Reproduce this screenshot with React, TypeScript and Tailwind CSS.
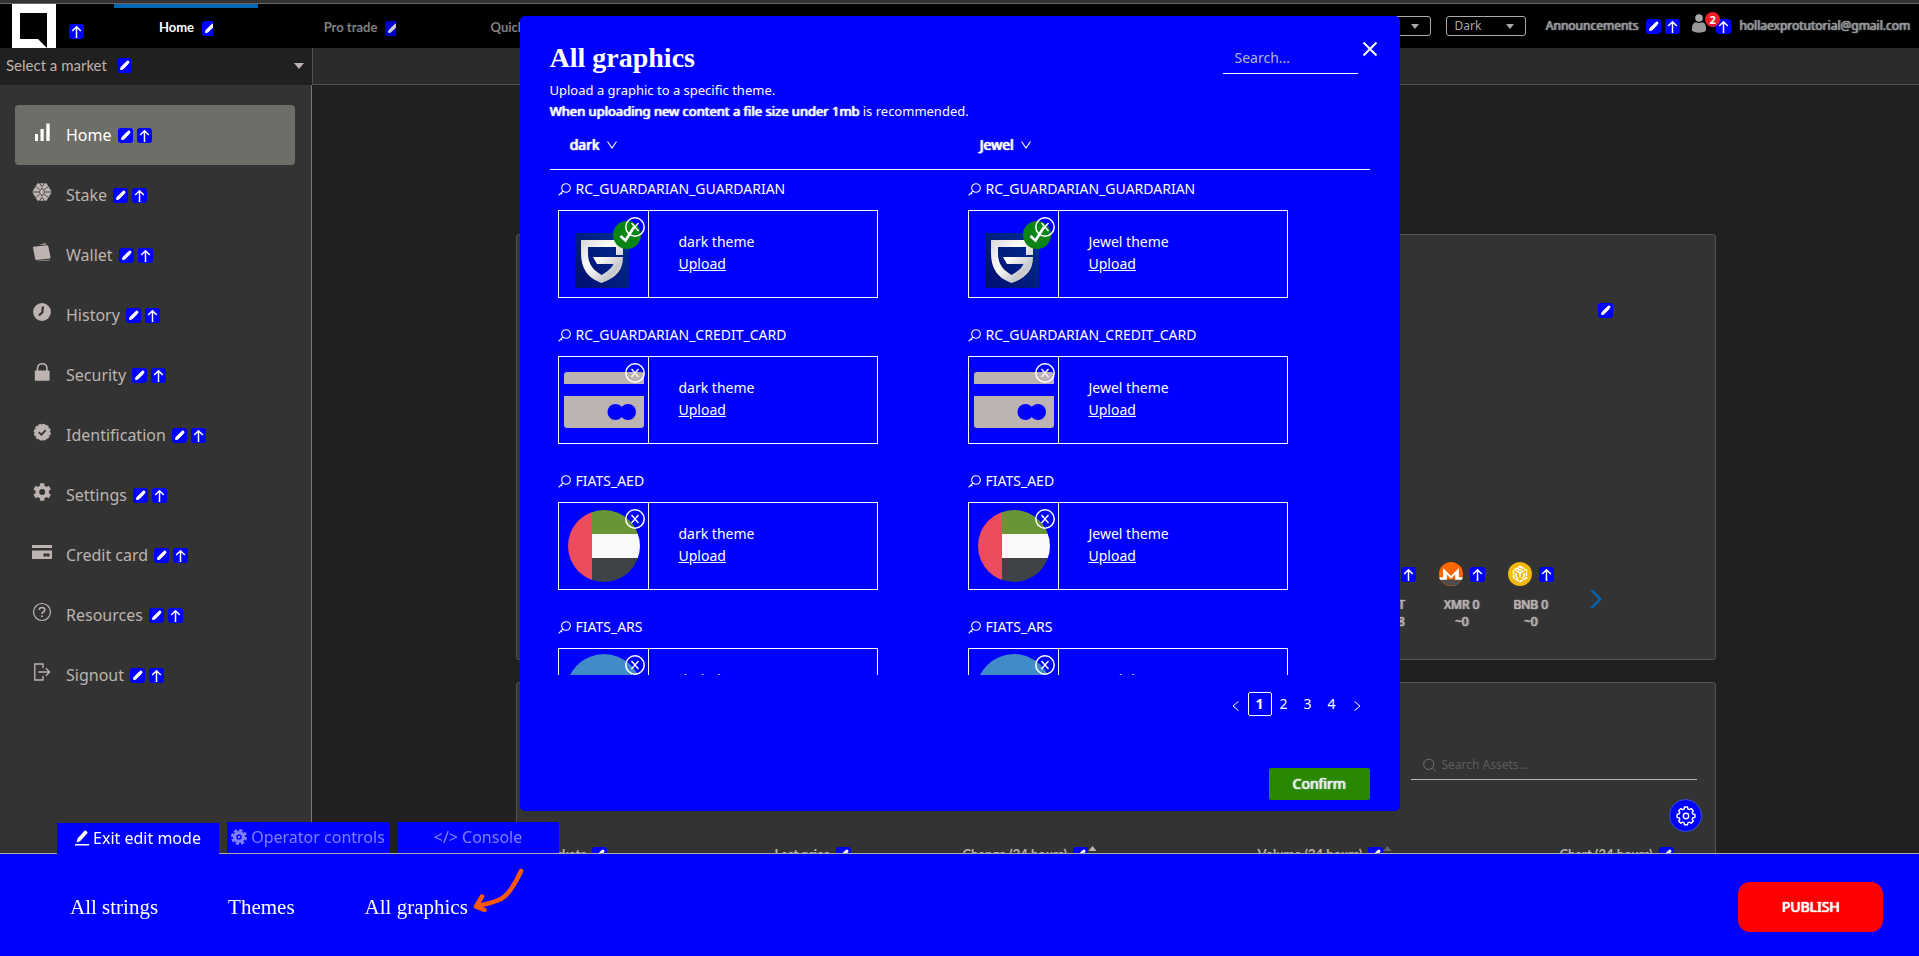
import type { ReactNode } from "react";

const softBold = "[text-shadow:0_0_1px_currentColor,1px_0_1px_currentColor]";

function PencilShape() {
  return (
    <>
      <path d="M3.2 12l.7-3L8.900 3.900l2.400 2.300L6.200 11.300z" fill="#fff" />
      <path d="M9.300 3.500l.7-.6c.3-.3.7-.3 1 0l1.200 1.200c.3.3.3.7 0 1l-.6.7z" fill="#fff" />
      <path d="M4.500 10.500L11 4" stroke="#fff" strokeWidth="2.600" strokeLinecap="round" />
    </>
  );
}

function EditBadge({ narrow = false, dim = false }: { narrow?: boolean; dim?: boolean }) {
  return (
    <button
      type="button"
      aria-label="Edit text"
      className={`flex h-[15px] shrink-0 items-center overflow-hidden rounded-[3px] bg-[#0000ff] ${narrow ? "w-[11px] rounded-r-none" : "w-[15px]"} ${dim ? "opacity-80" : ""}`}
    >
      <svg width="15" height="15" viewBox="0 0 15 15" className="shrink-0" aria-hidden="true">
        <PencilShape />
      </svg>
    </button>
  );
}

function UploadBadge({ className = "" }: { className?: string }) {
  return (
    <button
      type="button"
      aria-label="Upload graphic"
      className={`h-[15px] w-[15px] shrink-0 rounded-[3px] bg-[#0000ff] ${className}`}
    >
      <svg width="15" height="15" viewBox="0 0 15 15" aria-hidden="true">
        <path d="M7.500 14V3.200M3.200 7l4.300-4.300L11.800 7" fill="none" stroke="#fff" strokeWidth="1.500" />
      </svg>
    </button>
  );
}

const icons: Record<string, ReactNode> = {
  home: <path d="M3 12h3v7H3zM8.500 7h3.200v12H8.500zM14.300 1.500h3.400V19h-3.400z" fill="currentColor" />,
  stake: (
    <>
      <path d="M5.500 1.300h9L19.800 10l-5.300 8.700h-9L.2 10z" fill="currentColor" />
      <path
        d="M0 10h7M13 10h7M7.500 1L10 4.800 12.500 1M7.500 19l2.500-3.800 2.500 3.800M10 6L7.200 10l2.800 4 2.800-4zM3.800 4.500l4 3.200M16.200 4.500l-4 3.200M3.800 15.500l4-3.200M16.200 15.500l-4-3.200"
        fill="none"
        stroke="#333"
        strokeWidth=".8"
      />
    </>
  ),
  wallet: (
    <path
      d="M1.300 4.700L14.800 3.200q1.200 0 1.500 1.200l2.200 10.500q.2 1.200-1 1.500l-13 1.600q-1.300 0-1.400-1.200L1 5.500zM6.500 3l7-2 .8 1.400zM5 19l13-1.500v.8L6 19.300z"
      fill="currentColor"
    />
  ),
  history: (
    <>
      <circle cx="10" cy="10" r="8.900" fill="currentColor" />
      <path d="M10.900 4.500L10.300 10.300 7 13.500" fill="none" stroke="#333" strokeWidth="2.200" />
    </>
  ),
  security: (
    <>
      <rect x="2.800" y="8.500" width="14.800" height="10.200" rx=".8" fill="currentColor" />
      <path d="M5.500 9V6.500C5.500 3.500 7.300 1.800 10.200 1.800s4.700 1.700 4.700 4.700V9" fill="none" stroke="currentColor" strokeWidth="1.600" />
    </>
  ),
  identification: (
    <>
      <circle cx="10.300" cy="10.200" r="7.700" fill="currentColor" />
      <circle cx="10.300" cy="10.200" r="7.700" fill="none" stroke="currentColor" strokeWidth="1.600" strokeDasharray="3 1" />
      <path d="M6.800 10.200l2.700 2.500 4.200-4.500" fill="none" stroke="#333" strokeWidth="1.700" />
    </>
  ),
  settings: (
    <>
      <circle cx="10.200" cy="10" r="4.900" fill="none" stroke="currentColor" strokeWidth="3.800" />
      <path
        d="M10.200 1.200v3M10.200 15.800v3M2.500 5.600l2.600 1.500M15.300 12.900l2.600 1.500M2.500 14.400l2.600-1.500M15.300 7.100l2.600-1.500"
        stroke="currentColor"
        strokeWidth="4.200"
      />
    </>
  ),
  card: (
    <>
      <path d="M.8 3h18.400q.8 0 .8.800V6H0V3.800Q0 3 .8 3zM0 8.500h20V16.200q0 .8-.8.800H.8q-.8 0-.8-.8z" fill="currentColor" />
      <circle cx="13" cy="13" r="1.800" fill="#333" />
      <circle cx="16" cy="13" r="1.800" fill="#333" />
    </>
  ),
  resources: (
    <>
      <circle cx="10" cy="10" r="8.500" fill="none" stroke="currentColor" strokeWidth="1.200" />
      <path d="M7.200 8q0-2.600 2.800-2.600T12.800 8q0 1.300-1.400 2T10 12" fill="none" stroke="currentColor" strokeWidth="1.500" />
      <circle cx="10" cy="14.300" r="1" fill="currentColor" />
    </>
  ),
  signout: (
    <path
      d="M11 6V2H2.800v16H11v-4M6.500 10h11M13.800 6.200L17.600 10l-3.800 3.800"
      fill="none"
      stroke="currentColor"
      strokeWidth="1.300"
    />
  ),
};

const menu = [
  ["home", "Home"],
  ["stake", "Stake"],
  ["wallet", "Wallet"],
  ["history", "History"],
  ["security", "Security"],
  ["identification", "Identification"],
  ["settings", "Settings"],
  ["card", "Credit card"],
  ["resources", "Resources"],
  ["signout", "Signout"],
];

function Caret({ className = "" }: { className?: string }) {
  return (
    <svg width="10" height="6" viewBox="0 0 10 6" className={className} aria-hidden="true">
      <path d="M0 0h10L5 6z" fill="currentColor" />
    </svg>
  );
}

function HeaderSelect({ label, value }: { label: string; value: string }) {
  return (
    <div className="relative h-5 w-20 text-[#aaa]">
      <select
        aria-label={label}
        className="h-5 w-full appearance-none rounded-[3px] border border-[#aaa] bg-black pl-2 text-xs leading-4 text-[#aaa]"
      >
        <option>{value}</option>
      </select>
      <Caret className="pointer-events-none absolute top-2 right-3 h-[5px] w-2" />
    </div>
  );
}

function Header() {
  return (
    <header className="flex h-11 shrink-0 items-stretch bg-black text-[13px]">
      <div className="flex w-[114px] shrink-0 items-center pl-3">
        <svg width="44" height="44" viewBox="0 0 44 44" role="img" aria-label="Exchange logo">
          <path d="M0 0h44v44H0z" fill="#fff" />
          <path d="M8 9h27v35l-9-9H8z" fill="#000" />
        </svg>
        <UploadBadge className="mt-2.5 ml-[13px]" />
      </div>
      <nav className="flex gap-[30px] font-['Lato',sans-serif] font-bold">
        <a href="#home" className="flex w-36 items-center justify-center gap-2 border-t-4 border-[#0066b4] text-white">
          Home <EditBadge narrow />
        </a>
        <a href="#trade" className="flex w-36 items-center justify-center gap-2 border-t-4 border-transparent text-[#808080]">
          Pro trade <EditBadge narrow dim />
        </a>
        <a href="#quick" className="flex w-36 items-center justify-center gap-2 border-t-4 border-transparent text-[#808080]">
          Quick trade <EditBadge narrow dim />
        </a>
      </nav>
      <div className="mr-[9px] ml-auto flex items-center text-xs text-[#999]">
        <div className="mr-5 flex gap-[15px]">
          <HeaderSelect label="Language" value="EN" />
          <HeaderSelect label="Theme" value="Dark" />
        </div>
        <a href="#announcements" className={softBold}>Announcements</a>
        <span className="ml-2 flex gap-1">
          <EditBadge />
          <UploadBadge />
        </span>
        <span className="relative ml-3 flex items-center">
          <svg width="14" height="19" viewBox="0 0 14 19" className="mr-2.5 mb-1.5" aria-hidden="true">
            <circle cx="7" cy="4" r="3.800" fill="#aaa" />
            <path d="M0 14Q0 9 4 8.300q3 1.400 6 0 4 .7 4 5.700v3q-7 3.400-14 0z" fill="#999" />
          </svg>
          <UploadBadge />
          <span className="absolute -top-0.5 left-[13px] flex h-[15px] w-[15px] items-center justify-center rounded-full bg-[#ee1c25] text-[11px] leading-none font-bold text-white">
            2
          </span>
        </span>
        <a href="#account" className={`ml-2 ${softBold}`}>hollaexprotutorial@gmail.com</a>
      </div>
    </header>
  );
}

function Sidebar() {
  return (
    <aside className="w-[312px] shrink-0 border-r border-[#777] bg-[#333] pt-5 pl-[15px]">
      {menu.map(([icon, label], i) => (
        <div
          key={icon}
          className={`flex h-[60px] w-[280px] items-center rounded pl-[17px] text-base ${i === 0 ? "bg-[#6d6e68] text-white" : "text-[#bdb3b0]"}`}
        >
          <svg width="20" height="20" viewBox="0 0 20 20" className="mr-3.5 mb-1.5 shrink-0" aria-hidden="true">
            {icons[icon]}
          </svg>
          <a href={`#${icon}`}>{label}</a>
          <span className="ml-1.5 flex gap-1 pt-px">
            <EditBadge />
            <UploadBadge />
          </span>
        </div>
      ))}
    </aside>
  );
}

function Coin({ symbol, value, children }: { symbol: string; value: string; children: ReactNode }) {
  return (
    <div className="flex w-[46px] flex-col items-center">
      <div className="mb-2.5 flex items-center gap-[7px]">
        {children}
        <UploadBadge />
      </div>
      <div className={`text-xs leading-[17px] whitespace-nowrap ${softBold}`}>{symbol}</div>
      <div className={`text-xs leading-[17px] ${softBold}`}>{value}</div>
    </div>
  );
}

function SortMark({ dim = false }: { dim?: boolean }) {
  return (
    <svg width="9" height="12" viewBox="0 0 9 12" className="self-start" aria-hidden="true">
      <path d="M.5 5L4.500 0l4 5z" fill={dim ? "#666" : "#bdb3b0"} />
      <path d="M.5 7h8l-4 5z" fill="#666" />
    </svg>
  );
}

function MainArea() {
  const columns = ["Markets", "Last price", "Change (24 hours)", "Volume (24 hours)", "Chart (24 hours)"];
  return (
    <main className="min-w-0 flex-1 overflow-hidden bg-[#202020] pt-[149px] text-[#bdb3b0]">
      <div className="mx-auto max-w-[1200px]">
        <section className="flex h-[426px] flex-col items-end justify-between rounded-[3px] border border-[#555] bg-[#333] pt-[68px] pb-[29px]">
          <div className="mr-[102px]">
            <EditBadge />
          </div>
          <div className="mr-[113px] flex items-center">
            <div className="flex gap-[23px]">
              <Coin symbol="DOT" value="~9.8">
                <svg width="24" height="24" viewBox="0 0 24 24" aria-hidden="true">
                  <circle cx="12" cy="12" r="12" fill="#e6007a" />
                </svg>
              </Coin>
              <Coin symbol="XMR 0" value="~0">
                <svg width="24" height="24" viewBox="0 0 24 24" aria-hidden="true">
                  <circle cx="12" cy="12" r="12" fill="#ff6600" />
                  <path d="M1.500 17.500h21A12 12 0 0 1 1.500 17.500z" fill="#4d4d4d" />
                  <path d="M1 17.800h6.800v-5.300l4.200 4.200 4.200-4.200v5.300H23l.8-2.600h-3.900V6L12 13.900 4.100 6v9.200H.2z" fill="#fff" />
                </svg>
              </Coin>
              <Coin symbol="BNB 0" value="~0">
                <svg width="24" height="24" viewBox="0 0 24 24" aria-hidden="true">
                  <circle cx="12" cy="12" r="12" fill="#f0b90b" />
                  <path
                    d="M12 4.500l6.500 3.700v7.600L12 19.500l-6.500-3.700V8.200zM8 8.500l4 2.300 4-2.300M12 10.800v5.500M8 11v4l2 1.200M16 11v4l-2 1.200M9.500 6.500L12 8l2.500-1.500"
                    fill="none"
                    stroke="#fff"
                    strokeWidth="1.600"
                    strokeDasharray="4 .8"
                  />
                </svg>
              </Coin>
            </div>
            <button type="button" aria-label="Next assets" className="mt-1.5 ml-9">
              <svg width="12" height="18" viewBox="0 0 12 18" aria-hidden="true">
                <path d="M0 0h3l9 9-9 9H0l8.500-9z" fill="#0066b4" />
              </svg>
            </button>
          </div>
        </section>
        <section className="mt-[22px] h-[400px] rounded-[3px] border border-[#555] bg-[#333] pt-[68px] pl-[22px] text-[13px]">
          <label className="mr-[18px] ml-auto flex h-[29px] w-[286px] items-center border-b border-[#bdb3b0] pl-3">
            <svg width="15" height="15" viewBox="0 0 15 15" aria-hidden="true">
              <path d="M10 10l4.500 4.500M6.200.7a5.500 5.500 0 1 0 0 11 5.500 5.500 0 0 0 0-11z" fill="none" stroke="#777" />
            </svg>
            <input
              type="text"
              aria-label="Search assets"
              placeholder="Search Assets..."
              className="ml-[5px] w-full bg-transparent text-xs outline-none placeholder:text-[#5c5c5c]"
            />
          </label>
          <table className="mt-[66px] w-full table-fixed border-collapse">
            <colgroup>
              <col className="w-[236px]" />
              <col className="w-[188px]" />
              <col className="w-[295px]" />
              <col className="w-[302px]" />
              <col />
            </colgroup>
            <thead>
              <tr>
                {columns.map((column, i) => (
                  <th key={column} scope="col" className="p-0 text-left font-['Lato',sans-serif] font-bold">
                    <span className="flex items-center leading-4">
                      <span className="mr-1.5">{column}</span>
                      <EditBadge />
                      {(i === 2 || i === 3) && <SortMark dim={i === 3} />}
                    </span>
                  </th>
                ))}
              </tr>
            </thead>
          </table>
        </section>
      </div>
    </main>
  );
}

function GuardarianArt() {
  return (
    <svg width="88" height="86" viewBox="0 0 88 86" aria-hidden="true">
      <defs>
        <linearGradient id="navy" x1="0" y1="1" x2="1" y2="0">
          <stop offset="0" stopColor="#000d70" />
          <stop offset="1" stopColor="#003090" />
        </linearGradient>
        <linearGradient id="steel" x1="0" y1="0" x2="1" y2="1">
          <stop offset="0" stopColor="#d8d8dc" />
          <stop offset=".4" stopColor="#ffffff" />
          <stop offset=".75" stopColor="#c8c8cc" />
          <stop offset="1" stopColor="#f4f4f4" />
        </linearGradient>
      </defs>
      <path d="M16 22h54v55H16z" fill="url(#navy)" />
      <path
        d="M22 29h42v15h-7v-8H29v6c0 11 5 17 13.500 22C49 60 53 57 54.500 53H38l-4-7h30c0 14-8 21-21.500 26C29 67 22 58 22 42z"
        fill="url(#steel)"
      />
      <circle cx="68" cy="24" r="14" fill="#0a8414" />
      <path d="M61.500 25l5 4.500L75 16" fill="none" stroke="#fff" strokeWidth="2.600" />
    </svg>
  );
}

function CardArt() {
  return (
    <svg width="88" height="86" viewBox="0 0 88 86" aria-hidden="true">
      <path d="M8 15h74q3 0 3 3v9H5v-9q0-3 3-3zM5 39h80v29q0 3-3 3H8q-3 0-3-3z" fill="#bdb3b0" />
      <circle cx="56.500" cy="55" r="8" fill="#0000ff" />
      <circle cx="69" cy="55" r="8" fill="#0000ff" />
    </svg>
  );
}

function AedArt({ id }: { id: string }) {
  return (
    <svg width="88" height="86" viewBox="0 0 88 86" aria-hidden="true">
      <clipPath id={id}>
        <circle cx="45" cy="43" r="36" />
      </clipPath>
      <g clipPath={`url(#${id})`}>
        <path d="M33 7h48v24H33z" fill="#699635" />
        <path d="M33 31h48v24H33z" fill="#f9f9f9" />
        <path d="M33 55h48v24H33z" fill="#3e4347" />
        <path d="M9 7h24v72H9z" fill="#ed4c5c" />
      </g>
    </svg>
  );
}

function ArsArt({ id }: { id: string }) {
  return (
    <svg width="88" height="86" viewBox="0 0 88 86" aria-hidden="true">
      <clipPath id={id}>
        <circle cx="45" cy="43" r="38" />
      </clipPath>
      <g clipPath={`url(#${id})`}>
        <path d="M7 5h76v76H7z" fill="#428bc9" />
        <path d="M7 30h76v26H7z" fill="#f9f9f9" />
        <circle cx="45" cy="43" r="8" fill="#ffe62e" />
      </g>
    </svg>
  );
}

function GraphicItem({ name, theme, children }: { name: string; theme: string; children: ReactNode }) {
  return (
    <div className="mb-7 w-[320px]">
      <h3 className="flex h-[18px] items-center gap-[5px] text-sm leading-[18px]">
        <svg width="13" height="13" viewBox="0 0 13 13" aria-hidden="true">
          <path d="M8 .7a4.300 4.300 0 1 1 0 8.600 4.300 4.300 0 0 1 0-8.600zM4.800 8.200L.6 12.300M3 10l1.300 1.200" fill="none" stroke="#fff" strokeWidth="1.100" />
        </svg>
        {name}
      </h3>
      <div className="mt-3 flex h-[88px] border border-white">
        <div className="relative w-[90px] border-r border-white">
          {children}
          <button type="button" aria-label={`Remove ${name}`} className="absolute top-1.5 right-[3px] h-5 w-5">
            <svg width="20" height="20" viewBox="0 0 20 20" aria-hidden="true">
              <circle cx="10" cy="10" r="9.200" fill="none" stroke="#fff" strokeWidth="1.500" />
              <path d="M6.500 6l7 8M13.500 6l-7 8" stroke="#fff" strokeWidth="1.400" />
            </svg>
          </button>
        </div>
        <div className="pt-5 pl-[30px] text-sm leading-[22px]">
          <div>{theme} theme</div>
          <button type="button" className="underline">Upload</button>
        </div>
      </div>
    </div>
  );
}

function ThemeColumn({ theme }: { theme: string }) {
  return (
    <div className="w-1/2 pt-2.5 pl-2">
      <GraphicItem name="RC_GUARDARIAN_GUARDARIAN" theme={theme}><GuardarianArt /></GraphicItem>
      <GraphicItem name="RC_GUARDARIAN_CREDIT_CARD" theme={theme}><CardArt /></GraphicItem>
      <GraphicItem name="FIATS_AED" theme={theme}><AedArt id={`aed-${theme}`} /></GraphicItem>
      <GraphicItem name="FIATS_ARS" theme={theme}><ArsArt id={`ars-${theme}`} /></GraphicItem>
    </div>
  );
}

function ThemePicker({ theme }: { theme: string }) {
  return (
    <button type="button" className={`flex w-1/2 items-center gap-2 pl-5 text-sm leading-[22px] ${softBold}`}>
      {theme}
      <svg width="10" height="8" viewBox="0 0 10 8" aria-hidden="true">
        <path d="M.5.5L5 7 9.500.5" fill="none" stroke="#fff" strokeWidth="1.100" />
      </svg>
    </button>
  );
}

function GraphicsModal() {
  return (
    <div className="pointer-events-none fixed inset-x-0 top-4 flex justify-center">
      <div
        role="dialog"
        aria-label="All graphics"
        className="pointer-events-auto relative w-full max-w-[880px] rounded-[5px] bg-[#0000ff] px-[30px] pb-[11px] text-white"
      >
        <button type="button" aria-label="Close" className="absolute top-[25px] right-[22px]">
          <svg width="16" height="16" viewBox="0 0 16 16" aria-hidden="true">
            <path d="M1.500 1.500l13 13M14.500 1.500l-13 13" stroke="#fff" strokeWidth="2" />
          </svg>
        </button>
        <div className="flex items-start justify-between pt-[26px] pr-3">
          <h2 className="font-['Liberation_Serif',serif] text-[28px] leading-8 font-bold">All graphics</h2>
          <input
            type="text"
            aria-label="Search graphics"
            placeholder="Search..."
            className="h-8 w-[135px] border-b border-white bg-transparent pl-3 text-sm outline-none placeholder:text-[#b0b6cc]"
          />
        </div>
        <p className="mt-[7px] text-[13px] leading-[18px]">Upload a graphic to a specific theme.</p>
        <p className="mt-[3px] text-[13px] leading-[18px]">
          <span className={softBold}>When uploading new content a file size under 1mb</span> is recommended.
        </p>
        <div className="mt-3.5 flex border-b border-white pb-[13px]">
          <ThemePicker theme="dark" />
          <ThemePicker theme="Jewel" />
        </div>
        <div className="flex h-[505px] overflow-hidden">
          <ThemeColumn theme="dark" />
          <ThemeColumn theme="Jewel" />
        </div>
        <nav aria-label="Pages" className="mt-[17px] flex items-center justify-end text-sm">
          <button type="button" aria-label="Previous page" className="flex h-6 w-6 items-center justify-center pt-1">
            <svg width="7" height="10" viewBox="0 0 7 10" aria-hidden="true">
              <path d="M6.500.5L1 5l5.500 4.500" fill="none" stroke="#fff" />
            </svg>
          </button>
          <button type="button" className="h-6 w-6 rounded-[2px] border border-white leading-[22px] font-bold">1</button>
          <button type="button" className="h-6 w-6">2</button>
          <button type="button" className="h-6 w-6">3</button>
          <button type="button" className="h-6 w-6">4</button>
          <button type="button" aria-label="Next page" className="ml-0.5 flex h-6 w-6 items-center justify-center pt-1">
            <svg width="7" height="10" viewBox="0 0 7 10" aria-hidden="true">
              <path d="M.5.5L6 5 .5 9.500" fill="none" stroke="#fff" />
            </svg>
          </button>
        </nav>
        <div className="mt-[52px] flex justify-end">
          <button type="button" className={`h-8 w-[101px] rounded-[2px] bg-[#298800] text-sm text-[#eee] ${softBold}`}>Confirm</button>
        </div>
      </div>
    </div>
  );
}

function OperatorBar() {
  return (
    <div className="fixed inset-x-0 bottom-0">
      <div className="flex items-end gap-2 pl-[57px] text-base text-white">
        <button type="button" className="relative -mb-px flex h-[31px] w-[162px] items-center justify-center gap-1 bg-[#0000ff] pb-0.5">
          <svg width="14" height="16" viewBox="0 0 14 16" aria-hidden="true">
            <path d="M0 14h14v1.500H0zM1.500 12.500l1-4L9.500.8q.8-.8 1.600 0l1.100 1.100q.8.8 0 1.600L5 11.300z" fill="#fff" />
          </svg>
          Exit edit mode
        </button>
        <button type="button" className="flex h-[31px] w-[162px] items-center justify-center gap-1 bg-[#0000ff] pb-0.5 text-[#8080ff]">
          <svg width="16" height="16" viewBox="0 0 16 16" aria-hidden="true">
            <circle cx="8" cy="8" r="6.800" fill="none" stroke="currentColor" strokeWidth="2.400" strokeDasharray="3.300 2.040" />
            <circle cx="8" cy="8" r="4.400" fill="none" stroke="currentColor" strokeWidth="3.400" />
            <circle cx="8" cy="8" r="1.300" fill="currentColor" />
          </svg>
          Operator controls
        </button>
        <button type="button" className="flex h-[31px] w-[162px] items-center justify-center gap-1 bg-[#0000ff] pb-0.5 text-[#8080ff]">
          <span aria-hidden="true">&lt;/&gt;</span>
          Console
        </button>
      </div>
      <div className="flex h-[103px] items-center border-t border-[#aaa] bg-[#0000ff] pt-[3px] pr-9 pl-[70px] text-white">
        <nav className="flex items-center gap-[70px] font-['Liberation_Serif',serif] text-[21px] leading-6">
          <a href="#strings">All strings</a>
          <a href="#themes">Themes</a>
          <a href="#graphics" className="relative">
            All graphics
            <svg width="56" height="48" viewBox="0 0 56 48" className="absolute -top-7 left-[105px]" aria-hidden="true">
              <path
                d="M51 4C46 15 38 28 31 32Q22 36 6 39.500M12 29.500L6 39.500l8.500 3.500"
                fill="none"
                stroke="#ff5a00"
                strokeWidth="4.500"
                strokeLinecap="round"
                strokeLinejoin="round"
              />
            </svg>
          </a>
        </nav>
        <button type="button" className={`ml-auto h-[50px] w-[145px] rounded-xl bg-[#ff0000] text-sm ${softBold}`}>PUBLISH</button>
      </div>
    </div>
  );
}

export default function App() {
  return (
    <div className="relative flex h-screen flex-col overflow-hidden bg-[#202020] font-['Noto_Sans',sans-serif]">
      <div className="h-1 shrink-0 border-b border-[#666] bg-[#333]" />
      <Header />
      <div className="flex h-[37px] shrink-0 bg-[#2b2b2b]">
        <div className="flex w-[312px] shrink-0 items-center bg-[#202020] pr-2 pb-0.5 pl-1.5 font-['Lato',sans-serif] text-[15px] text-[#bdb3b0]">
          <button type="button" className="mr-2.5">Select a market</button>
          <EditBadge />
          <Caret className="ml-auto" />
        </div>
        <div className="flex-1 border-b border-l border-[#505050]" />
      </div>
      <div className="flex min-h-0 flex-1">
        <Sidebar />
        <MainArea />
      </div>
      <button
        type="button"
        aria-label="Page settings"
        className="fixed right-[217px] bottom-[124px] flex h-[33px] w-[33px] items-center justify-center rounded-full border border-[#3355cc] bg-[#0000ff]"
      >
        <svg width="20" height="20" viewBox="0 0 20 20" fill="none" stroke="#fff" strokeWidth="1.400" strokeLinejoin="round" aria-hidden="true">
          <path d="M8.500 1h3l.4 2 1.600.7 1.700-1.100 2.100 2.100-1.100 1.700.7 1.600 2 .4v3l-2 .4-.7 1.600 1.100 1.700-2.100 2.100-1.700-1.100-1.600.7-.4 2h-3l-.4-2-1.600-.7-1.700 1.100-2.100-2.100 1.100-1.700-.7-1.600-2-.4v-3l2-.4.7-1.600L2.700 4.700l2.100-2.100 1.700 1.100L8.100 3z" />
          <circle cx="10" cy="10" r="2.700" />
        </svg>
      </button>
      <GraphicsModal />
      <OperatorBar />
    </div>
  );
}
